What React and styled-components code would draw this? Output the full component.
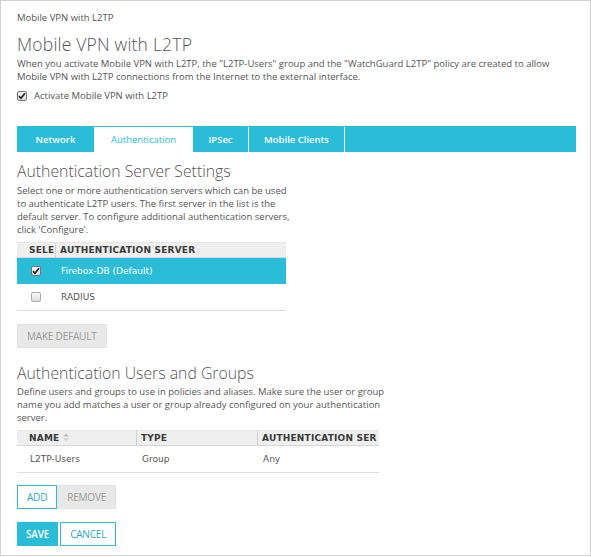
import React from "react";
import styled, { createGlobalStyle } from "styled-components";

const TEAL = "#2bbdd8";

const Global = createGlobalStyle`
  html, body { margin: 0; padding: 0; background: #fff; }
  body { font-family: "Open Sans", "Liberation Sans", sans-serif; color: #555; }
  * { box-sizing: border-box; }
`;

const Frame = styled.div`
  width: 591px;
  height: 556px;
  border: 1px solid #d2d2d2;
  padding: 10px 14px 0 16px;
  display: flex;
  flex-direction: column;
`;

const Crumb = styled.div`
  font-size: 9.5px;
  line-height: 14px;
  color: #555;
`;

const Title = styled.h1`
  margin: 8px 0 0;
  font-size: 17.5px;
  font-weight: 300;
  line-height: 22px;
  letter-spacing: 0.2px;
  color: #555;
`;

const H2 = styled.h2`
  margin: ${(p) => p.$top || 0}px 0 0;
  font-size: 15.8px;
  font-weight: 300;
  line-height: 22px;
  color: #555;
`;

const Para = styled.p`
  margin: ${(p) => p.$top ?? 1}px 0 0;
  font-size: 9.5px;
  line-height: 13px;
  color: #555;
  white-space: nowrap;
`;

const CheckRow = styled.label`
  display: flex;
  align-items: center;
  gap: 7px;
  margin-top: 6px;
  font-size: 9.5px;
  line-height: 14px;
  color: #555;
`;

const Box = styled.span`
  width: 10px;
  height: 10px;
  flex: none;
  border: 1px solid ${(p) => (p.$checked ? "#777" : "#aaa")};
  border-radius: 2px;
  background: linear-gradient(#fcfcfc, #dcdcdc);
  display: inline-flex;
  align-items: center;
  justify-content: center;
`;

const Check = ({ checked }) => (
  <Box $checked={checked}>
    {checked && (
      <svg width="8" height="8" viewBox="0 0 8 8">
        <path d="M1 4.2 L3 6.3 L7 1.3" fill="none" stroke="#222" strokeWidth="1.7" />
      </svg>
    )}
  </Box>
);

const Tabs = styled.div`
  margin-top: 23px;
  height: 26px;
  background: ${TEAL};
  display: flex;
  padding-top: 1px;
`;

const Tab = styled.div`
  width: ${(p) => p.$w}px;
  display: flex;
  align-items: center;
  justify-content: center;
  font-size: 9.5px;
  font-weight: ${(p) => (p.$active ? 400 : 600)};
  color: ${(p) => (p.$active ? TEAL : "#fff")};
  background: ${(p) => (p.$active ? "#fff" : "transparent")};
  border-right: 1px solid #fff;
`;

const Table = styled.div`
  width: ${(p) => p.$w}px;
  margin-top: ${(p) => p.$top || 0}px;
  font-family: "DejaVu Sans", Verdana, sans-serif;
  border-bottom: 1px solid #ddd;
`;

const HeadRow = styled.div`
  display: grid;
  grid-template-columns: ${(p) => p.$cols};
  height: 16px;
  background: #efefef;
  border-bottom: 1px solid #d6d6d6;
  border-top: 1px solid #e6e6e6;
`;

const HeadCell = styled.div`
  display: flex;
  align-items: center;
  gap: 4px;
  padding-left: ${(p) => p.$pl || 4}px;
  font-size: 9px;
  font-weight: bold;
  color: #3a3a3a;
  overflow: hidden;
  white-space: nowrap;
  border-right: ${(p) => (p.$last ? "none" : "1px solid #cfcfcf")};
  letter-spacing: 0.2px;
`;

const Row = styled.div`
  display: grid;
  grid-template-columns: ${(p) => p.$cols};
  height: 26px;
  align-items: center;
  background: ${(p) => (p.$selected ? TEAL : "#fff")};
  color: ${(p) => (p.$selected ? "#fff" : "#555")};
  font-size: 9px;
`;

const Cell = styled.div`
  padding-left: ${(p) => p.$pl || 4}px;
  display: flex;
  align-items: center;
  white-space: nowrap;
  overflow: hidden;
`;

const BtnGroup = styled.div`
  display: flex;
  gap: ${(p) => p.$gap || 0}px;
  margin-top: ${(p) => p.$top || 0}px;
`;

const Btn = styled.button`
  height: 24px;
  padding: 0 ${(p) => p.$px || 10}px;
  font-family: "Open Sans", "Liberation Sans", sans-serif;
  font-size: 10px;
  font-weight: ${(p) => (p.$variant === "primary" ? 600 : 400)};
  letter-spacing: -0.2px;
  border: 1px solid ${(p) => (p.$variant === "disabled" ? "#e3e3e3" : TEAL)};
  background: ${(p) =>
    p.$variant === "primary" ? TEAL : p.$variant === "disabled" ? "#e8e8e8" : "#fff"};
  color: ${(p) =>
    p.$variant === "primary" ? "#fff" : p.$variant === "disabled" ? "#9a9a9a" : "#2aa9c4"};
  cursor: pointer;
`;

const SortIcon = () => (
  <svg width="6" height="9" viewBox="0 0 6 9">
    <path d="M3 0.5 L5.5 3.6 H0.5 Z" fill="#bbb" />
    <path d="M3 8.5 L5.5 5.4 H0.5 Z" fill="#ccc" />
  </svg>
);

export default function App() {
  const c1 = "39px 1fr";
  const c2 = "120px 121px 1fr";
  return (
    <>
      <Global />
      <Frame>
        <Crumb>Mobile VPN with L2TP</Crumb>
        <Title>Mobile VPN with L2TP</Title>
        <Para $top={2}>
          When you activate Mobile VPN with L2TP, the "L2TP-Users" group and the "WatchGuard L2TP" policy are created to allow
          <br />
          Mobile VPN with L2TP connections from the Internet to the external interface.
        </Para>
        <CheckRow>
          <Check checked />
          Activate Mobile VPN with L2TP
        </CheckRow>

        <Tabs>
          <Tab $w={78}>Network</Tab>
          <Tab $w={98} $active>Authentication</Tab>
          <Tab $w={56}>IPSec</Tab>
          <Tab $w={96}>Mobile Clients</Tab>
        </Tabs>

        <H2 $top={8}>Authentication Server Settings</H2>
        <Para $top={1.5}>
          Select one or more authentication servers which can be used
          <br />
          to authenticate L2TP users. The first server in the list is the
          <br />
          default server. To configure additional authentication servers,
          <br />
          click 'Configure'.
        </Para>

        <Table $w={269} $top={6}>
          <HeadRow $cols={c1}>
            <HeadCell $pl={12}>SELE</HeadCell>
            <HeadCell $last>AUTHENTICATION SERVER</HeadCell>
          </HeadRow>
          <Row $cols={c1} $selected>
            <Cell $pl={14}><Check checked /></Cell>
            <Cell $pl={5}>Firebox-DB (Default)</Cell>
          </Row>
          <Row $cols={c1}>
            <Cell $pl={14}><Check /></Cell>
            <Cell $pl={5}>RADIUS</Cell>
          </Row>
        </Table>

        <BtnGroup $top={13}>
          <Btn $variant="disabled" $px={9}>MAKE DEFAULT</Btn>
        </BtnGroup>

        <H2 $top={14}>Authentication Users and Groups</H2>
        <Para>
          Define users and groups to use in policies and aliases. Make sure the user or group
          <br />
          name you add matches a user or group already configured on your authentication
          <br />
          server.
        </Para>

        <Table $w={362} $top={6}>
          <HeadRow $cols={c2}>
            <HeadCell $pl={12}>NAME <SortIcon /></HeadCell>
            <HeadCell>TYPE</HeadCell>
            <HeadCell $last>AUTHENTICATION SER</HeadCell>
          </HeadRow>
          <Row $cols={c2}>
            <Cell $pl={13}>L2TP-Users</Cell>
            <Cell $pl={5}>Group</Cell>
            <Cell $pl={5}>Any</Cell>
          </Row>
        </Table>

        <BtnGroup $top={12}>
          <Btn $px={9}>ADD</Btn>
          <Btn $variant="disabled" $px={9}>REMOVE</Btn>
        </BtnGroup>

        <BtnGroup $top={13} $gap={2}>
          <Btn $variant="primary" $px={8}>SAVE</Btn>
          <Btn $px={9}>CANCEL</Btn>
        </BtnGroup>
      </Frame>
    </>
  );
}
